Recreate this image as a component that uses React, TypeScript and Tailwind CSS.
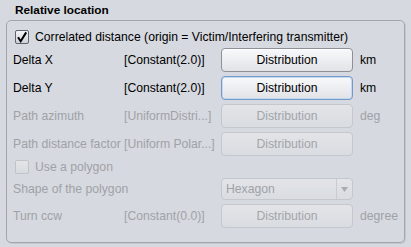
import React from 'react';

const font = { fontFamily: '"Liberation Sans", Arial, sans-serif' };

type BtnKind = 'normal' | 'focus' | 'off';

const DistButton = ({ kind }: { kind: BtnKind }) => {
    const cls =
        kind === 'off'
            ? 'border-[#c4c7cc] from-[#e2e4e8] to-[#d9dce0] text-[#a2a5aa]'
            : kind === 'focus'
            ? 'border-[#7199c9] from-[#f8f9fa] to-[#e1e3e7] text-black shadow-[inset_0_0_0_1px_#c5d8ef]'
            : 'border-[#8d9197] from-[#f8f9fa] to-[#e1e3e7] text-black shadow-[inset_0_1px_0_#ffffff]';
    return (
        <div className={`w-[132px] h-[24px] rounded-[4px] border bg-linear-to-b flex items-center justify-center ${cls}`}>
            Distribution
        </div>
    );
};

const CheckBox = ({ checked, disabled }: { checked?: boolean; disabled?: boolean }) => (
    <div
        className={`w-[14px] h-[14px] rounded-[2px] border flex items-center justify-center ${
            disabled
                ? 'border-[#c0c3c8] bg-linear-to-b from-[#e3e5e8] to-[#d8dbdf]'
                : 'border-[#5f646b] bg-linear-to-b from-[#f3f4f6] to-[#cfd3d9]'
        }`}
    >
        {checked && (
            <svg width="12" height="12" viewBox="0 0 12 12">
                <path d="M2 6.2 L4.7 10.2 L10.2 1.4" fill="none" stroke="#000" strokeWidth="2" />
            </svg>
        )}
    </div>
);

const Row = ({
    label,
    value,
    unit,
    kind,
}: {
    label: string;
    value: string;
    unit?: string;
    kind: BtnKind;
}) => {
    const txt = kind === 'off' ? 'text-[#9fa2a8]' : 'text-black';
    return (
        <div className="flex items-center h-[24px]">
            <div className={`w-[111px] whitespace-nowrap ${txt}`}>{label}</div>
            <div className={`w-[97px] whitespace-nowrap ${txt}`}>{value}</div>
            <DistButton kind={kind} />
            {unit && <div className={`ml-[7px] ${txt}`}>{unit}</div>}
        </div>
    );
};

export default function App() {
    return (
        <div className="w-[411px] h-[247px] bg-[#d6d9df] text-[12.2px] leading-[14px] overflow-hidden" style={font}>
            <div className="pl-[15px] pt-[3px] h-[20px] font-bold text-[11.8px] text-black">Relative location</div>
            <div className="ml-[6px] w-[399px] h-[223px] rounded-[5px] border border-[#a3a6ab] shadow-[1px_1px_0_#c4c7cc] pl-[6px] pt-[9px] flex flex-col gap-[4px]">
                <div className="flex items-center h-[14px] pl-[2px] gap-[6px] text-black">
                    <CheckBox checked />
                    <span>Correlated distance (origin = Victim/Interfering transmitter)</span>
                </div>
                <Row label="Delta X" value="[Constant(2.0)]" unit="km" kind="normal" />
                <Row label="Delta Y" value="[Constant(2.0)]" unit="km" kind="focus" />
                <Row label="Path azimuth" value="[UniformDistri...]" unit="deg" kind="off" />
                <Row label="Path distance factor" value="[Uniform Polar...]" kind="off" />
                <div className="flex items-center h-[14px] pl-[2px] gap-[6px] text-[#9fa2a8]">
                    <CheckBox disabled />
                    <span>Use a polygon</span>
                </div>
                <div className="flex items-center h-[22px]">
                    <div className="w-[208px] whitespace-nowrap text-[#9fa2a8]">Shape of the polygon</div>
                    <div className="w-[132px] h-[22px] rounded-[4px] border border-[#c4c7cc] bg-linear-to-b from-[#e2e4e8] to-[#d9dce0] flex items-center text-[#9fa2a8]">
                        <div className="flex-1 pl-[4px]">Hexagon</div>
                        <div className="w-[16px] h-full border-l border-[#c8cbd0] flex items-center justify-center">
                            <svg width="7" height="5" viewBox="0 0 7 5">
                                <path d="M0 0 H7 L3.5 5 Z" fill="#a9acb1" />
                            </svg>
                        </div>
                    </div>
                </div>
                <Row label="Turn ccw" value="[Constant(0.0)]" unit="degree" kind="off" />
            </div>
        </div>
    );
}
